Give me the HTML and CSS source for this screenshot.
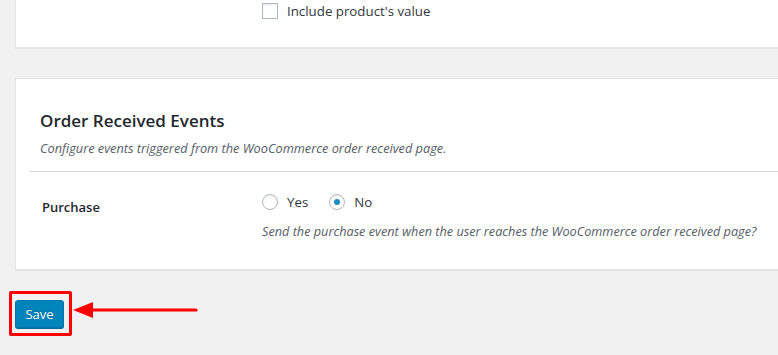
FILE: index.html
```html
<!doctype html>
<html>
  <head>
    <meta charset="utf-8">
    <link rel="stylesheet" href="styles.css">
  </head>
  <body>
    <div class="wrap">
      <div class="card card-top">
        <div class="row">
          <div class="row-label"></div>
          <div class="row-field">
            <label class="choice"><span class="checkbox"></span>Include product's value</label>
          </div>
        </div>
      </div>

      <div class="card card-events">
        <h2 class="card-title">Order Received Events</h2>
        <p class="card-desc">Configure events triggered from the WooCommerce order received page.</p>
        <div class="divider"></div>
        <div class="row row-purchase">
          <div class="row-label">Purchase</div>
          <div class="row-field">
            <div class="radios">
              <label class="choice"><span class="radio"></span>Yes</label>
              <label class="choice"><span class="radio checked"></span>No</label>
            </div>
            <p class="field-desc">Send the purchase event when the user reaches the WooCommerce order received page?</p>
          </div>
        </div>
      </div>

      <div class="actions">
        <button class="button-primary">Save</button>
        <span class="highlight"></span>
        <svg class="arrow" width="126" height="18" viewBox="0 0 126 18">
          <polygon points="0,9 20,1 20,17" fill="#ff0000"/>
          <line x1="18" y1="9" x2="123" y2="9" stroke="#ff0000" stroke-width="3.2" stroke-linecap="round"/>
        </svg>
      </div>
    </div>
  </body>
</html>
```

FILE: styles.css
```css
html, body {
  margin: 0;
  height: 100%;
}

body {
  background: #f1f1f1;
  font-family: "Open Sans", "Noto Sans", sans-serif;
  font-size: 13.3px;
  color: #23282d;
  overflow: hidden;
}

.wrap {
  padding-left: 15px;
  margin-right: -30px;
}

.card {
  background: #fff;
  border: 1px solid #e5e5e5;
  box-shadow: 0 1px 1px rgba(0, 0, 0, .04);
}

.card-top {
  border-top: 0;
  padding-top: 3px;
  height: 48px;
  box-sizing: border-box;
}

.row {
  display: flex;
}

.row-label {
  width: 246px;
  flex: none;
  box-sizing: border-box;
  padding-left: 26px;
}

.choice {
  display: inline-flex;
  align-items: center;
  line-height: 16px;
  color: #32373c;
}

.checkbox {
  width: 14px;
  height: 14px;
  border: 1px solid #b4b9be;
  box-shadow: inset 0 1px 2px rgba(0, 0, 0, .1);
  margin-right: 9px;
}

.card-events {
  margin-top: 30px;
  padding: 27px 0 0 0;
  height: 192px;
  box-sizing: border-box;
}

.card-title {
  margin: 0 0 0 24px;
  font-size: 17px;
  font-weight: 600;
  line-height: 30px;
  color: #23282d;
}

.card-desc {
  margin: 2px 0 0 24px;
  font-style: italic;
  font-size: 12.75px;
  line-height: 20px;
  color: #555d66;
}

.divider {
  margin: 13px 0 0 14px;
  border-top: 1px solid #d6d6d6;
}

.row-purchase {
  padding-top: 20px;
}

.row-purchase .row-label {
  font-size: 13px;
  font-weight: 600;
  padding-top: 6px;
  color: #23282d;
}

.radios {
  display: flex;
  gap: 21px;
  padding-top: 2px;
}

.radio {
  width: 14px;
  height: 14px;
  border: 1px solid #b4b9be;
  border-radius: 50%;
  box-shadow: inset 0 1px 2px rgba(0, 0, 0, .1);
  margin-right: 9px;
  display: inline-flex;
  align-items: center;
  justify-content: center;
}

.radio.checked::before {
  content: '';
  width: 6px;
  height: 6px;
  border-radius: 50%;
  background: #1e8cbe;
}

.field-desc {
  margin: 12px 0 0 0;
  font-style: italic;
  font-size: 12.7px;
  color: #555d66;
  line-height: 18px;
}

.actions {
  position: relative;
  margin-top: 30px;
}

.button-primary {
  font-family: inherit;
  font-size: 13px;
  color: #fff;
  background: #0085ba;
  border: 1px solid #0073aa;
  border-radius: 3px;
  box-shadow: 0 1px 0 #006799;
  text-shadow: 0 -1px 1px #006799;
  height: 28px;
  width: 49px;
  padding: 0;
}

.highlight {
  position: absolute;
  left: -6px;
  top: -9px;
  width: 57px;
  height: 39px;
  border: 3px solid #ff0000;
  border-radius: 2px;
}

.arrow {
  position: absolute;
  left: 58px;
  top: 1px;
}
```
